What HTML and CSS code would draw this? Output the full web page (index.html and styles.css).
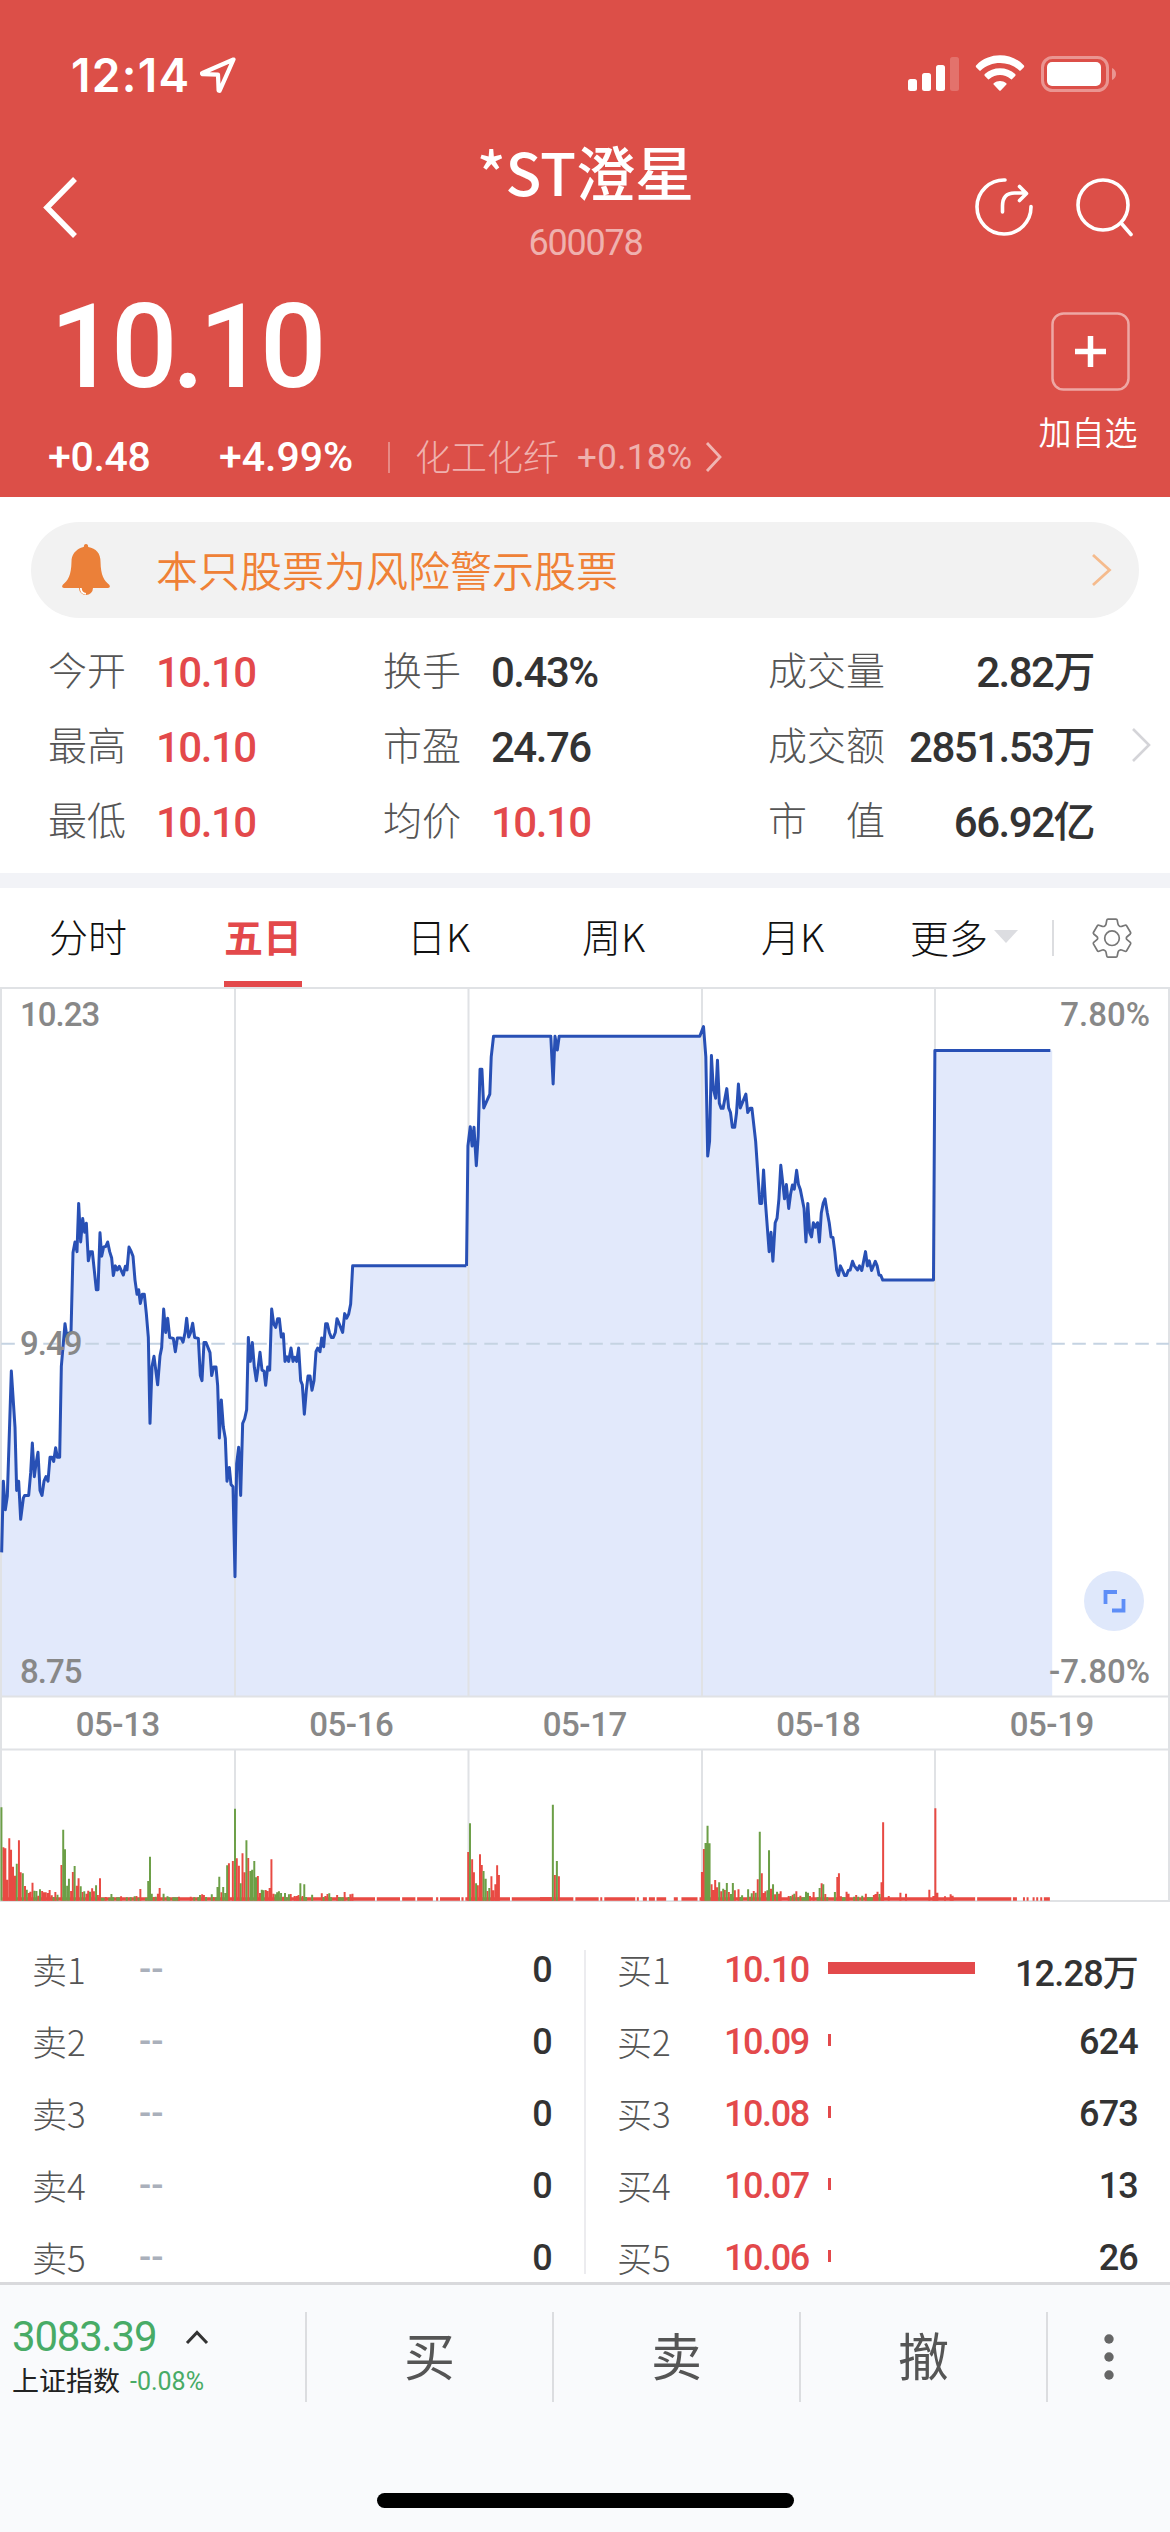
FILE: index.html
```html
<!DOCTYPE html>
<html lang="zh-CN">
<head>
<meta charset="utf-8">
<title>*ST澄星 600078</title>
<link rel="stylesheet" href="styles.css">
</head>
<body>
<div class="screen">
  <header class="header">
    <div class="status">
      <span class="clock">12:14</span>
      <svg class="locate" width="36" height="36" viewBox="0 0 36 36"><path d="M33.5 2.5 2.5 16a.6.6 0 0 0 .2 1.2L18 17.600l.6 15.500a.6.6 0 0 0 1.200.2Z" fill="none" stroke="#fff" stroke-width="4.200" stroke-linejoin="round"/></svg>
      <svg class="indicators" width="210" height="38" viewBox="0 0 210 38">
        <g fill="#fff">
          <rect x="1" y="25" width="9" height="12" rx="2.500"/>
          <rect x="15" y="19" width="9" height="18" rx="2.500"/>
          <rect x="29" y="11" width="9" height="26" rx="2.500"/>
          <rect x="43" y="3" width="9" height="34" rx="2.500" opacity=".2"/>
          <path d="M69.300 13.400Q68.200 12.300 69.300 11.200C82-2 104-2 116.700 11.200Q117.800 12.300 116.700 13.400L113.600 16.500Q113 17 112.300 16.400C102 6.400 84 6.400 73.700 16.400Q73 17 72.400 16.500Z"/>
          <path d="M77.800 21.900Q76.900 21 77.800 20.100C86 12.200 100 12.200 108.200 20.100Q109.100 21 108.200 21.900L104.900 25.200Q104.400 25.700 103.700 25.100C97.500 19.700 88.500 19.700 82.300 25.100Q81.600 25.700 81.100 25.200Z"/>
          <path d="M86.600 30.600Q86 30 86.700 29.300C90.500 26.200 95.500 26.200 99.300 29.300Q100 30 99.400 30.600L93.700 36.500Q93 37.100 92.300 36.500Z"/>
          <rect x="140" y="8" width="54" height="24" rx="5"/>
          <path d="M205 14v12q4-1.800 4-6t-4-6Z" opacity=".4"/>
        </g>
        <rect x="135.500" y="3.500" width="65" height="33" rx="10" fill="none" stroke="#fff" stroke-opacity=".4" stroke-width="3"/>
      </svg>
    </div>
    <div class="navbar">
      <svg class="back" width="40" height="64" viewBox="0 0 40 64"><path d="M36 3 8 31.500 36 60" fill="none" stroke="#fff" stroke-width="5.500"/></svg>
      <div class="title">
        <h1>*ST澄星</h1>
        <p>600078</p>
      </div>
      <div class="actions">
        <svg width="60" height="60" viewBox="0 0 60 60" fill="none" stroke="#fff" stroke-width="3.600" stroke-linecap="round" stroke-linejoin="round"><path d="M31 3A27 27 0 1 0 57 29.500M28.500 35V29q0-13 12-13H52M45.500 9.500 52.500 16.500 45.500 23.500"/></svg>
        <svg width="60" height="60" viewBox="0 0 60 60" fill="none" stroke="#fff" stroke-width="3.600" stroke-linecap="round"><circle cx="28" cy="28" r="25"/><path d="m46.500 46.500 9.500 11"/></svg>
      </div>
    </div>
    <div class="quote">
      <div class="quote-main">
        <div class="price num">10.10</div>
        <div class="changes num">
          <span class="delta">+0.48</span><span class="percent">+4.99%</span>
          <span class="rule"></span>
          <span class="sector">化工化纤</span><span class="sector-change">+0.18%</span>
          <svg width="18" height="32" viewBox="0 0 18 32"><path d="m2 2 13 14L2 30" fill="none" stroke="#f0b6b3" stroke-width="2.800"/></svg>
        </div>
      </div>
      <div class="watch">
        <svg width="80" height="80" viewBox="0 0 80 80"><rect x="1.500" y="1.500" width="76" height="76" rx="11" fill="none" stroke="#fff" stroke-opacity=".5" stroke-width="2.500"/><path d="M24 39.500h31M39.500 24v31" stroke="#fff" stroke-width="5.500"/></svg>
        <span>加自选</span>
      </div>
    </div>
  </header>

  <div class="notice">
    <svg width="50" height="54" viewBox="0 0 50 54"><path d="M25 1q2.200 0 2.200 3 12 2 12.300 14.500C39.800 33 43 37 48.200 41.800 49.500 43.500 49 45 46.500 45H32a7 7 0 1 1-14 0H3.500C1 45 .5 43.500 1.800 41.800 7 37 10.200 33 10.500 18.500 10.800 6 22.800 4 22.800 4q0-3 2.200-3Z" fill="#eb8039"/><path d="M19.800 45q.2 5.500 5.200 5.800" fill="none" stroke="#fff" stroke-width="1.800"/></svg>
    <span>本只股票为风险警示股票</span>
    <svg class="more" width="22" height="34" viewBox="0 0 22 34"><path d="m2 2 16.500 15L2 32" fill="none" stroke="#f5bb8d" stroke-width="2.800"/></svg>
  </div>

  <section class="stats">
    <dl>
      <div><dt>今开</dt><dd class="up">10.10</dd></div>
      <div><dt>最高</dt><dd class="up">10.10</dd></div>
      <div><dt>最低</dt><dd class="up">10.10</dd></div>
    </dl>
    <dl>
      <div><dt>换手</dt><dd>0.43%</dd></div>
      <div><dt>市盈</dt><dd>24.76</dd></div>
      <div><dt>均价</dt><dd class="up">10.10</dd></div>
    </dl>
    <dl class="wide">
      <div><dt>成交量</dt><dd>2.82万</dd></div>
      <div><dt>成交额</dt><dd>2851.53万</dd></div>
      <div><dt>市　值</dt><dd>66.92亿</dd></div>
    </dl>
    <svg width="22" height="36" viewBox="0 0 22 36"><path d="m2 2 16 16L2 34" fill="none" stroke="#d4d4d8" stroke-width="2.600"/></svg>
  </section>

  <nav class="tabs">
    <a>分时</a><a class="active">五日</a><a>日K</a><a>周K</a><a>月K</a>
    <a class="dropdown">更多<svg width="24" height="13" viewBox="0 0 24 13"><path d="M0 0h24L12 13Z" fill="#dcdde1"/></svg></a>
    <span class="settings"><svg width="42" height="42" viewBox="0 0 42 42" fill="none" stroke="#777" stroke-width="1.700" stroke-linejoin="round"><path d="M17 2.200h8q1 0 1.200 1l.8 4q.3 1.400 1.600 2 .8.500 2 .2l3.500-1.200q1-.3 1.500.5l4 6.800q.4.800-.3 1.500l-3 2.500q-1 .8-1 1.700t1 1.700l3 2.500q.7.700.3 1.500l-4 6.800q-.5.800-1.500.5l-3.500-1.200q-1.200-.3-2 .2-1.300.6-1.600 2l-.8 4q-.2 1-1.200 1h-8q-1 0-1.200-1l-.8-4q-.3-1.400-1.600-2-.8-.5-2-.2l-3.500 1.200q-1 .3-1.500-.5l-4-6.800q-.4-.8.300-1.500l3-2.500q1-.8 1-1.700t-1-1.700l-3-2.500q-.7-.7-.3-1.500l4-6.800q.5-.8 1.500-.5l3.500 1.200q1.200.3 2-.2 1.300-.6 1.600-2l.8-4q.2-1 1.200-1Z"/><circle cx="21" cy="21.200" r="7.300"/></svg></span>
  </nav>

  <section class="chart">
    <svg class="plot" width="1170" height="915" viewBox="0 987 1170 915">
      <g fill="#e2e9fb">
        <path transform="translate(0 1000) scale(.33333 .45918)" d="M3 1518V1203L5 1203 10 1048 16 1110 22 1080 34 808 45 930 50 1068 56 1048 62 1131 70 1085 74 1079 86 1079 92 1030 97 965 103 1038 108 1010 114 985 120 1068 126 1079 132 1048 138 1038 144 1048 150 996 156 996 161 1005 167 975 172 996 179 996 184 798 195 705 201 735 207 725 213 725 219 550 225 527 231 548 236 443 242 527 248 476 254 506 259 486 265 568 271 548 277 548 289 631 294 631 300 507 305 558 311 538 317 537 323 527 329 548 335 562 340 600 346 579 352 588 358 580 370 599 376 580 381 588 387 538 393 547 399 558 405 610 411 641 416 631 421 661 427 641 433 641 439 683 445 735 450 922 456 798 462 776 473 838 480 775 485 757 491 673 497 724 503 693 509 735 520 737 526 766 532 736 543 736 549 745 555 725 560 693 566 734 572 724 578 704 584 735 595 737 601 818 606 829 612 746 618 746 630 768 635 818 641 799 648 799 653 840 658 954 664 871 670 930 676 955 681 1048 688 1018 693 1055 699 1060 705 1256 710 1010 716 974 722 1079 728 922 734 912 740 892 745 735 751 787 757 746 763 800 769 829 775 797 780 767 786 806 792 808 797 839 803 799 809 806 815 673 821 705 827 713 833 694 838 694 844 734 850 727 855 787 861 777 866 787 873 758 879 787 884 778 890 787 896 758 902 829 907 838 913 902 919 850 924 819 930 819 936 850 942 829 948 766 953 758 960 766 965 736 971 755 977 705 982 705 988 724 994 735 1000 735 1006 724 1011 694 1017 704 1028 724 1034 683 1040 693 1046 684 1052 662 1058 579 1399 579 1399 1518Z"/>
        <path transform="translate(440 1000) scale(.46556 .45918)" d="M56 1518V579L57 579 60 318 65 276 69 318 73 277 78 361 82 297 86 151 90 151 94 235 107 205 110 124 115 79 238 79 243 183 247 79 252 109 256 79 558 79 566 58 571 124 575 340 579 308 583 121 587 193 592 214 596 131 600 225 604 236 608 236 616 193 620 235 624 245 628 277 633 277 637 245 641 183 645 235 657 205 661 245 666 236 670 236 678 308 687 443 691 443 695 370 699 440 707 548 711 506 715 569 720 485 724 475 728 433 732 360 740 433 744 402 749 454 753 423 757 403 761 412 766 371 770 402 774 413 782 454 786 527 790 443 794 506 798 516 802 485 806 495 811 485 815 527 819 464 823 443 827 433 832 464 836 485 840 516 844 517 848 548 852 588 856 600 860 579 865 590 869 600 873 600 877 589 881 588 886 569 890 579 897 588 901 579 906 589 914 548 918 579 922 568 927 589 935 569 939 579 943 599 947 600 951 610 1060 610 1063 110 1315 110 1315 1518Z"/>
      </g>
      <g stroke="#e0e2e5" stroke-width="2" fill="none">
        <path d="M0 988H1170M0 1696.500H1170M0 1749.500H1170M0 1901H1170M1 988V1901M1169 988V1901M235 988V1696M468.500 988V1696M702 988V1696M935 988V1696M235 1750V1901M468.500 1750V1901M702 1750V1901M935 1750V1901"/>
      </g>
      <path d="M1.300 1343.800H1169" stroke="#c5d3e2" stroke-width="2" stroke-dasharray="13.500 7.500"/>
      <g class="prices">
        <path transform="translate(0 1000) scale(.33333 .45918)" d="M5 1203 10 1048 16 1110 22 1080 34 808 45 930 50 1068 56 1048 62 1131 70 1085 74 1079 86 1079 92 1030 97 965 103 1038 108 1010 114 985 120 1068 126 1079 132 1048 138 1038 144 1048 150 996 156 996 161 1005 167 975 172 996 179 996 184 798 195 705 201 735 207 725 213 725 219 550 225 527 231 548 236 443 242 527 248 476 254 506 259 486 265 568 271 548 277 548 289 631 294 631 300 507 305 558 311 538 317 537 323 527 329 548 335 562 340 600 346 579 352 588 358 580 370 599 376 580 381 588 387 538 393 547 399 558 405 610 411 641 416 631 421 661 427 641 433 641 439 683 445 735 450 922 456 798 462 776 473 838 480 775 485 757 491 673 497 724 503 693 509 735 520 737 526 766 532 736 543 736 549 745 555 725 560 693 566 734 572 724 578 704 584 735 595 737 601 818 606 829 612 746 618 746 630 768 635 818 641 799 648 799 653 840 658 954 664 871 670 930 676 955 681 1048 688 1018 693 1055 699 1060 705 1256 710 1010 716 974 722 1079 728 922 734 912 740 892 745 735 751 787 757 746 763 800 769 829 775 797 780 767 786 806 792 808 797 839 803 799 809 806 815 673 821 705 827 713 833 694 838 694 844 734 850 727 855 787 861 777 866 787 873 758 879 787 884 778 890 787 896 758 902 829 907 838 913 902 919 850 924 819 930 819 936 850 942 829 948 766 953 758 960 766 965 736 971 755 977 705 982 705 988 724 994 735 1000 735 1006 724 1011 694 1017 704 1028 724 1034 683 1040 693 1046 684 1052 662 1058 579 1399 579"/>
        <path transform="translate(440 1000) scale(.46556 .45918)" d="M57 579 60 318 65 276 69 318 73 277 78 361 82 297 86 151 90 151 94 235 107 205 110 124 115 79 238 79 243 183 247 79 252 109 256 79 558 79 566 58 571 124 575 340 579 308 583 121 587 193 592 214 596 131 600 225 604 236 608 236 616 193 620 235 624 245 628 277 633 277 637 245 641 183 645 235 657 205 661 245 666 236 670 236 678 308 687 443 691 443 695 370 699 440 707 548 711 506 715 569 720 485 724 475 728 433 732 360 740 433 744 402 749 454 753 423 757 403 761 412 766 371 770 402 774 413 782 454 786 527 790 443 794 506 798 516 802 485 806 495 811 485 815 527 819 464 823 443 827 433 832 464 836 485 840 516 844 517 848 548 852 588 856 600 860 579 865 590 869 600 873 600 877 589 881 588 886 569 890 579 897 588 901 579 906 589 914 548 918 579 922 568 927 589 935 569 939 579 943 599 947 600 951 610 1060 610 1063 110 1311 110"/>
      </g>
      <g transform="translate(0 1740) scale(.35714 .33333)" fill="none" stroke-width="5.500">
        <path stroke="#e84a43" stroke-width="10" d="M7 477H1050M1055 477H1120M1126 477H1163M1168 477H1212M1221 477H1227M1232 477H1288M1292 477H1298M1303 477H1428M1433 477H1546"/>
        <path stroke="#e84a43" d="M9.500 482V322M15 482V325M20 482V419M26 482V295M31 482V329M36.500 482V380M42 482V407M53 482V301M58 482V397M70 482V438M80 482V459M85 482V455M91 482V428M107 482V467M118 482V453M123 482V457M128 482V457M134 482V459M139 482V450M145 482V466M155 482V456M172 482V375M199 482V453M204 482V396M215 482V437M220 482V415M231 482V456M242 482V461M247 482V452M258 482V445M263 482V454M274 482V465M280 482V415M296 482V471M339 482V469M382 482V468M393 482V447M431 482V471M442 482V461M447 482V444M501 482V470M534 482V470M566 482V463M571 482V465M598 482V471M620 482V457M641 482V370M652 482V363M663 482V355M669 482V377M679 482V340M685 482V397M695 482V354M722 482V408M728 482V459M744 482V450M749 482V453M755 482V444M760 482V358M766 482V461M793 482V470M814 482V462M825 482V468M831 482V468M836 482V465M847 482V468M901 482V460M911 482V468M917 482V462M944 482V465M965 482V456M981 482V463M987 482V461M1311 482V336M1322 482V358M1327 482V397M1338 482V436M1344 482V343M1349 482V375M1365 482V453M1376 482V409M1381 482V451M1387 482V433M1392 482V376M1397 482V405"/>
        <path stroke="#6c9f47" d="M4 482V202M47 482V371M64 482V400M75 482V449M96 482V452M102 482V453M112 482V448M150 482V471M161 482V464M177 482V269M182 482V328M188 482V437M193 482V416M209 482V378M226 482V439M236 482V454M252 482V455M269 482V436M285 482V473M290 482V473M306 482V473M312 482V462M317 482V472M328 482V472M333 482V472M355 482V472M366 482V472M377 482V469M388 482V473M409 482V473M415 482V423M420 482V350M425 482V461M436 482V470M458 482V461M469 482V469M474 482V472M485 482V472M490 482V472M496 482V472M544 482V472M555 482V472M560 482V465M577 482V471M593 482V463M604 482V472M609 482V441M614 482V410M625 482V441M631 482V459M636 482V376M658 482V206M674 482V430M690 482V301M701 482V393M706 482V389M712 482V363M717 482V412M733 482V449M738 482V451M771 482V463M776 482V457M781 482V454M787 482V459M798 482V459M803 482V472M809 482V463M841 482V430M852 482V433M857 482V471M874 482V464M906 482V471M922 482V460M927 482V472M949 482V472M954 482V472M960 482V472M976 482V471M1316 482V250M1333 482V430M1354 482V393M1360 482V416M1370 482V444"/>
      </g>
      <g transform="translate(540 1740) scale(.40179 .33333)" fill="none" stroke-width="5">
        <path stroke="#e84a43" stroke-width="10" d="M0 477H83M88 477H146M150 477H155M160 477H237M241 477H246M256 477H266M271 477H286M290 477H314M333 477H343M352 477H392M397 477H1083M1088 477H1173M1177 477H1187M1202 477H1207M1211 477H1216M1226 477H1231M1235 477H1240M1245 477H1250M1254 477H1269"/>
        <path stroke="#e84a43" d="M37 482V405M47 482V409M403 482V396M408 482V327M427 482V433M431 482V450M436 482V420M441 482V442M451 482V454M460 482V450M470 482V456M485 482V451M494 482V448M523 482V470M532 482V453M542 482V418M552 482V400M556 482V459M561 482V454M575 482V446M585 482V463M595 482V461M599 482V454M619 482V468M629 482V464M638 482V454M648 482V467M672 482V468M681 482V456M701 482V430M710 482V462M740 482V411M744 482V400M749 482V469M763 482V455M768 482V461M787 482V465M811 482V461M831 482V465M835 482V462M840 482V455M850 482V427M854 482V247M868 482V468M897 482V458M911 482V461M969 482V449M979 482V468M984 482V205M989 482V458M1008 482V469M1022 482V463M1027 482V467"/>
        <path stroke="#6c9f47" d="M32 482V194M42 482V363M412 482V309M417 482V257M422 482V310M446 482V427M456 482V446M465 482V429M475 482V462M480 482V429M499 482V471M503 482V466M518 482V448M527 482V460M537 482V458M547 482V275M566 482V451M570 482V331M580 482V433M590 482V455M624 482V468M633 482V461M643 482V472M653 482V472M658 482V472M662 482V455M667 482V458M691 482V472M696 482V444M705 482V433M715 482V472M734 482V456M754 482V472M758 482V472M782 482V470M792 482V470M802 482V467M816 482V472M821 482V472M826 482V472M845 482V462"/>
      </g>
    </svg>
    <span class="axis high">10.23</span>
    <span class="axis mid">9.49</span>
    <span class="axis low">8.75</span>
    <span class="axis high right">7.80%</span>
    <span class="axis low right">-7.80%</span>
    <div class="dates"><span>05-13</span><span>05-16</span><span>05-17</span><span>05-18</span><span>05-19</span></div>
    <svg class="expand" width="60" height="60" viewBox="0 0 60 60"><circle cx="30" cy="30" r="30" fill="#dfe8fb"/><path d="M33 21H21.500V33M28 39.500H39.500V28" fill="none" stroke="#5e8ef7" stroke-width="3.800"/></svg>
  </section>

  <section class="book">
    <div class="side sell">
      <div class="row"><span class="level">卖1</span><span class="none">--</span><span class="vol">0</span></div>
      <div class="row"><span class="level">卖2</span><span class="none">--</span><span class="vol">0</span></div>
      <div class="row"><span class="level">卖3</span><span class="none">--</span><span class="vol">0</span></div>
      <div class="row"><span class="level">卖4</span><span class="none">--</span><span class="vol">0</span></div>
      <div class="row"><span class="level">卖5</span><span class="none">--</span><span class="vol">0</span></div>
    </div>
    <div class="divider"></div>
    <div class="side buy">
      <div class="row"><span class="level">买1</span><span class="bid">10.10</span><i style="width:147px"></i><span class="vol">12.28万</span></div>
      <div class="row"><span class="level">买2</span><span class="bid">10.09</span><i style="width:3px"></i><span class="vol">624</span></div>
      <div class="row"><span class="level">买3</span><span class="bid">10.08</span><i style="width:3px"></i><span class="vol">673</span></div>
      <div class="row"><span class="level">买4</span><span class="bid">10.07</span><i style="width:3px"></i><span class="vol">13</span></div>
      <div class="row"><span class="level">买5</span><span class="bid">10.06</span><i style="width:3px"></i><span class="vol">26</span></div>
    </div>
  </section>

  <footer class="footer">
    <div class="bar">
      <div class="index">
        <div class="index-top"><span>3083.39</span><svg width="24" height="16" viewBox="0 0 24 16"><path d="m2 14 10-10.500L22 14" fill="none" stroke="#333" stroke-width="3"/></svg></div>
        <div class="index-sub"><span>上证指数</span><b>-0.08%</b></div>
      </div>
      <a>买</a><a>卖</a><a>撤</a>
      <div class="dots"><svg width="10" height="46" viewBox="0 0 10 46" fill="#666"><circle cx="5" cy="5" r="4.700"/><circle cx="5" cy="23" r="4.700"/><circle cx="5" cy="41" r="4.700"/></svg></div>
    </div>
    <div class="home"></div>
  </footer>
</div>
</body>
</html>
```
FILE: styles.css
```css
* { box-sizing: border-box; margin: 0; padding: 0; }
body { background: #fff; }
svg { display: block; flex: none; }

.screen {
  width: 1170px;
  height: 2532px;
  overflow: hidden;
  display: flex;
  flex-direction: column;
  font-family: Roboto, "Noto Sans CJK SC", sans-serif;
  color: #333;
  white-space: nowrap;
}

/* Header */
.header { height: 497px; background: #dc4f48; color: #fff; }
.status { height: 140px; padding: 0 55px 0 71px; display: flex; align-items: flex-start; }
.clock { margin-top: 48px; font: 600 46px/54px Inter, sans-serif; letter-spacing: 1.300px; width: 129px; }
.locate { margin-top: 57px; }
.indicators { margin: 54px -2px 0 auto; }

.navbar { height: 142px; display: flex; justify-content: space-between; padding: 0 35px 0 39px; }
.navbar > * { flex: none; }
.back { margin-top: 36px; }
.title { margin: -2px 0 0 118px; width: 400px; text-align: center; }
.title h1 { font: 500 59px/66px "Noto Sans CJK SC", sans-serif; }
.title p { margin-top: 18px; font-size: 36px; line-height: 42px; letter-spacing: -1.200px; color: #efb1ae; }
.actions { display: flex; gap: 41px; margin-top: 37px; }

.quote { display: flex; justify-content: space-between; padding: 0 30px 0 48px; }
.price { height: 126px; margin: 2px 0 0 2px; font-size: 117px; font-weight: 500; line-height: 126px; letter-spacing: -5.500px; }
.changes { display: flex; align-items: center; height: 60px; margin-top: 17px; font-size: 41px; font-weight: 500; }
.delta { width: 171px; letter-spacing: -.3px; }
.percent { width: 169px; }
.rule { width: 2px; height: 31px; background: #e78a85; }
.sector { margin-left: 25px; width: 162px; font: 300 36px/52px "Noto Sans CJK SC", sans-serif; color: #efb1ae; margin-top: -4px; }
.sector-change { width: 128px; font-size: 35px; font-weight: 400; letter-spacing: .3px; color: #efb1ae; }
.watch { display: flex; flex-direction: column; align-items: center; margin-top: 30px; width: 104px; }
.watch svg { margin-left: 5px; }
.watch span { margin-top: 14px; font: 350 33px/50px "Noto Sans CJK SC", sans-serif; }

/* Risk notice */
.notice { height: 96px; margin: 25px 31px 0; padding: 0 26px 0 30px; border-radius: 48px; background: #f2f2f2; display: flex; align-items: center; }
.notice span { margin: -2px 0 0 45px; font: 350 42px/60px "Noto Sans CJK SC", sans-serif; color: #ef8136; }
.notice .more { margin-left: auto; }

/* Key figures */
.stats { height: 255px; padding: 15px 17px 0 48px; display: flex; }
.stats dl:first-child { width: 335px; }
.stats dl:nth-child(2) { width: 385px; }
.stats .wide { width: 326px; }
.stats dl > div { display: flex; height: 75px; line-height: 75px; }
.stats dt { width: 108px; font-family: "Noto Sans CJK SC", sans-serif; font-weight: 300; font-size: 39px; color: #555; position: relative; top: -2px; }
.stats dd { font-size: 42px; font-weight: 500; letter-spacing: -1.500px; position: relative; top: 2px; }
.stats .wide dd { margin-left: auto; }
.stats .up { color: #e3494b; }
.stats > svg { margin: 94px 0 0 auto; }

/* Period tabs */
.tabs { height: 114px; border-top: 15px solid #f2f3f7; display: flex; align-items: center; padding-left: 49px; font: 300 39px/97px "Noto Sans CJK SC", sans-serif; color: #111; }
.tabs a { position: relative; height: 99px; margin-top: -2px; }
.tabs a:nth-child(1) { width: 175px; }
.tabs a:nth-child(2) { width: 183px; }
.tabs a:nth-child(3) { width: 175px; }
.tabs a:nth-child(4) { width: 179px; }
.tabs a:nth-child(5) { width: 149px; }
.tabs .active { color: #e3494b; font-weight: 600; }
.tabs .active::after { content: ""; position: absolute; left: 0; bottom: -2px; width: 78px; height: 7px; background: #e3494b; }
.tabs .dropdown { display: flex; align-items: center; gap: 6px; width: 142px; }
.tabs .settings { height: 36px; border-left: 2px solid #dcdde0; padding-left: 37px; display: flex; align-items: center; }

/* Chart */
.chart { position: relative; height: 915px; }
.prices { fill: none; stroke: #2850b5; stroke-width: 3; stroke-linejoin: round; }
.prices path { vector-effect: non-scaling-stroke; }
.axis { position: absolute; left: 20px; font-size: 33px; font-weight: 500; line-height: 40px; color: #888; letter-spacing: -1px; }
.axis.high { top: 8px; }
.axis.mid { top: 337px; }
.axis.low { top: 665px; }
.axis.right { left: auto; right: 20px; letter-spacing: 0; }
.dates { position: absolute; left: 1px; right: 0; top: 711px; display: flex; font-size: 33px; font-weight: 500; line-height: 54px; letter-spacing: -.4px; color: #888; }
.dates span { width: 233.500px; text-align: center; }
.expand { position: absolute; left: 1084px; top: 584px; }

/* Order book */
.book { flex: none; height: 380px; padding: 31px 32px 0; display: flex; }
.sell { width: 520px; }
.divider { width: 2px; height: 324px; margin: 17px 0 0 32px; background: #ececef; }
.buy { width: 552px; padding-left: 31px; }
.row { display: flex; align-items: center; height: 72px; font-size: 36px; font-weight: 500; }
.row span { padding-top: 2px; }
.row .level { width: 107px; padding: 0 0 1px; font: 300 35px/50px "Noto Sans CJK SC", sans-serif; color: #555; }
.none { color: #aab0bb; }
.bid { width: 104px; color: #e3494b; letter-spacing: -1.400px; }
.row i { height: 12px; background: #e3494b; margin-top: -2px; }
.vol { margin-left: auto; letter-spacing: -.8px; }

/* Bottom bar */
.footer { flex: none; height: 250px; border-top: 3px solid #d9d9dc; background: #f9fafc; display: flex; flex-direction: column; align-items: center; justify-content: space-between; padding: 27px 0 24px; }
.bar { width: 100%; height: 90px; display: flex; }
.bar > * { flex: none; height: 90px; }
.index { width: 305px; padding-left: 12px; }
.index-top { display: flex; align-items: center; gap: 29px; font-size: 42px; line-height: 50px; color: #48ab66; letter-spacing: -1.200px; }
.index-sub { display: flex; align-items: center; gap: 10px; line-height: 40px; font-size: 27px; color: #222; }
.index-sub b { font-size: 25px; font-weight: 400; color: #48ab66; }
.bar a { width: 247px; border-left: 2px solid #dcdde0; text-align: center; font: 400 51px/84px "Noto Sans CJK SC", sans-serif; color: #555; }
.bar .dots { flex: 1; border-left: 2px solid #dcdde0; display: flex; align-items: center; justify-content: center; }
.home { width: 417px; height: 15px; border-radius: 8px; background: #000; }
```
